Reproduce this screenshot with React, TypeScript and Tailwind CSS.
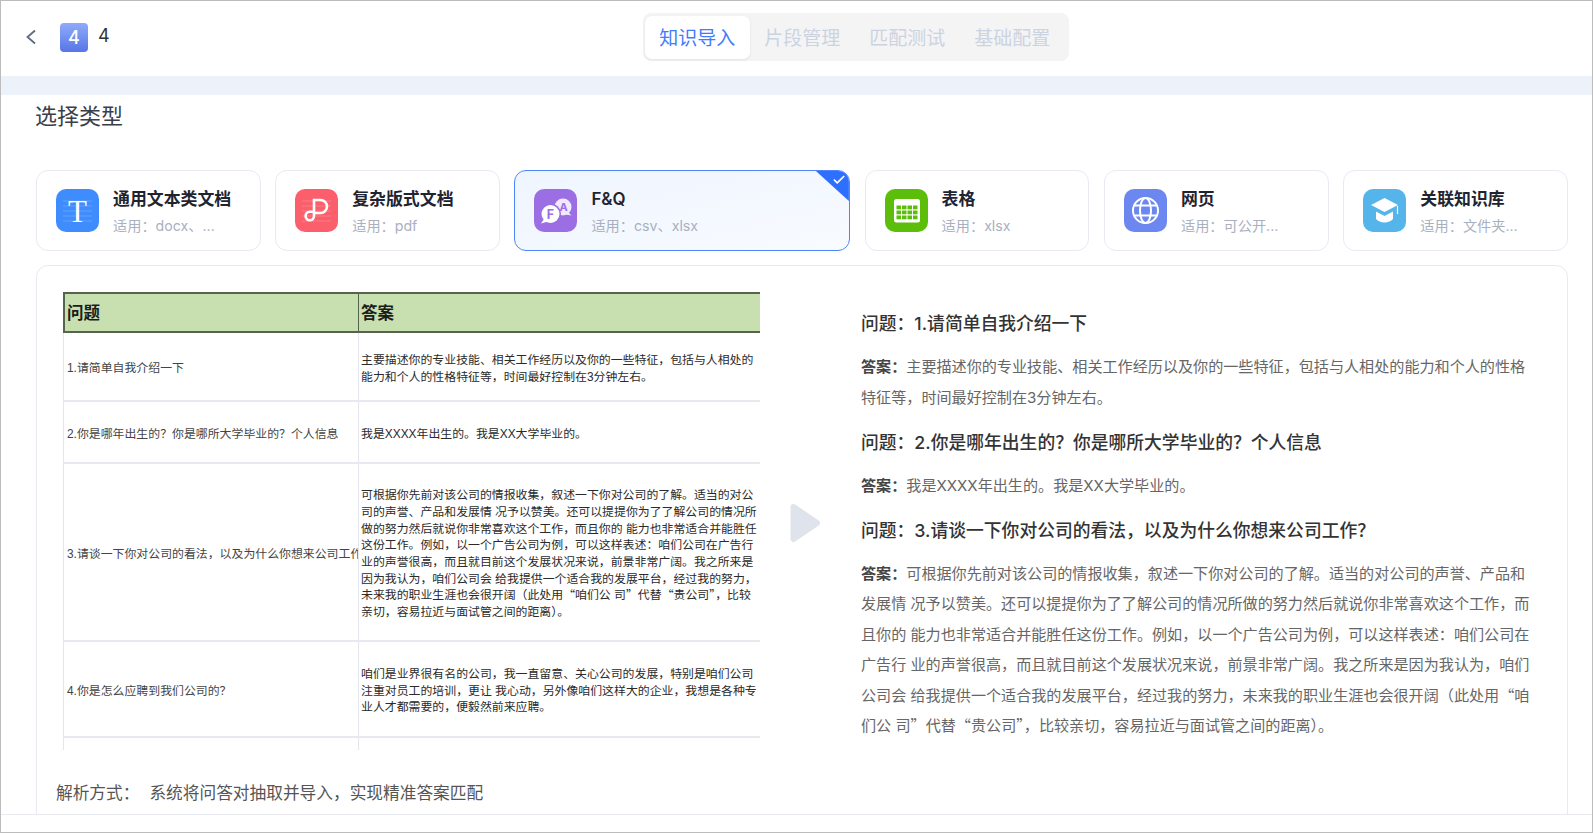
import { Check } from 'lucide-react'
import type { ReactNode } from 'react'

const tabs = ['知识导入', '片段管理', '匹配测试', '基础配置']

function IconBox({ className, children }: { className: string; children: ReactNode }) {
  return (
    <div className={`w-[43px] h-[43px] rounded-[10px] flex-shrink-0 overflow-hidden ${className}`}>
      <svg viewBox="0 0 43 43" className="w-full h-full">
        {children}
      </svg>
    </div>
  )
}

function FaintLines() {
  return (
    <g stroke="#ffffff" strokeOpacity="0.18" strokeWidth="1">
      <path d="M7 12h29M7 17h29M7 22h29M7 27h29M7 32h29" />
    </g>
  )
}

// curly quotes come out full width only from the CJK font
function Quoted({ text }: { text: string }) {
  return (
    <>
      {text.split(/([“”])/).map((part, i) =>
        part === '“' || part === '”' ? (
          <span key={i} className="leading-none font-['Noto_Sans_CJK_SC',sans-serif]">
            {part}
          </span>
        ) : (
          part
        ),
      )}
    </>
  )
}

const cards = [
  {
    title: '通用文本类文档',
    sub: '适用：docx、...',
    width: 'w-[224.500px]',
    icon: (
      <IconBox className="bg-[#3f8cff]">
        <FaintLines />
        <text x="21.5" y="33" textAnchor="middle" fontSize="31" fontFamily="Liberation Serif, serif" fill="#fff">
          T
        </text>
      </IconBox>
    ),
  },
  {
    title: '复杂版式文档',
    sub: '适用：pdf',
    width: 'w-[224.500px]',
    icon: (
      <IconBox className="bg-[#fb5f6b]">
        <FaintLines />
        <path
          d="M19 27V11h6.5a6.5 6.5 0 0 1 0 13H19M19 27a4.2 4.2 0 1 1-4.2-4.2H19"
          fill="none"
          stroke="#fff"
          strokeWidth="2.6"
        />
      </IconBox>
    ),
  },
  {
    title: 'F&Q',
    sub: '适用：csv、xlsx',
    width: 'w-[335.500px]',
    selected: true,
    icon: (
      <IconBox className="bg-[#9b6fe3]">
        <circle cx="29" cy="18" r="8.500" fill="#f1e9fd" />
        <path d="M34 23l3.500 3.500-6-1z" fill="#f1e9fd" />
        <text x="29.500" y="22" textAnchor="middle" fontSize="11" fontWeight="700" fontFamily="Inter, sans-serif" fill="#9b6fe3">
          A
        </text>
        <circle cx="16.500" cy="25" r="10.500" fill="#9b6fe3" />
        <circle cx="16.500" cy="25" r="9" fill="#fff" />
        <path d="M10 30l-3 4.500 7-2z" fill="#fff" />
        <text x="16.500" y="29.500" textAnchor="middle" fontSize="12.500" fontWeight="700" fontFamily="Inter, sans-serif" fill="#9b6fe3">
          F
        </text>
      </IconBox>
    ),
  },
  {
    title: '表格',
    sub: '适用：xlsx',
    width: 'w-[224.700px]',
    icon: (
      <IconBox className="bg-[#5cbd0a]">
        <rect x="9" y="10" width="26" height="23.500" rx="2.500" fill="#fff" />
        <g fill="#5cbd0a">
          {[16.5, 21.5, 26.5].map((y) =>
            [11.5, 17, 22.5, 28].map((x) => <rect key={`${x}-${y}`} x={x} y={y} width="4.500" height="3.800" />),
          )}
        </g>
      </IconBox>
    ),
  },
  {
    title: '网页',
    sub: '适用：可公开...',
    width: 'w-[224.700px]',
    icon: (
      <IconBox className="bg-[#6c88f0]">
        <g fill="none" stroke="#fff" strokeWidth="2">
          <circle cx="21.5" cy="21.5" r="12.500" />
          <ellipse cx="21.500" cy="21.500" rx="5.500" ry="12.500" />
          <path d="M10.500 16.500h22M10.500 26.500h22" />
        </g>
      </IconBox>
    ),
  },
  {
    title: '关联知识库',
    sub: '适用：文件夹...',
    width: 'w-[224.700px]',
    icon: (
      <IconBox className="bg-[#55b4ea]">
        <path d="M21.500 9L35 16l-13.500 7L8 16z" fill="#fff" />
        <path d="M13 22.500l8.500 4.500 8.500-4.500V30c-2 2-5 3.500-8.500 3.500S15 32 13 30z" fill="#fff" />
        <path d="M34.500 17v8" stroke="#fff" strokeWidth="1.200" />
      </IconBox>
    ),
  },
]

const rows = [
  {
    h: 'h-[69px]',
    q: '1.请简单自我介绍一下',
    a: ['主要描述你的专业技能、相关工作经历以及你的一些特征，包括与人相处的', '能力和个人的性格特征等，时间最好控制在3分钟左右。'],
  },
  {
    h: 'h-[62px]',
    q: '2.你是哪年出生的？你是哪所大学毕业的？个人信息',
    a: ['我是XXXX年出生的。我是XX大学毕业的。'],
  },
  {
    h: 'h-[178px]',
    q: '3.请谈一下你对公司的看法，以及为什么你想来公司工作',
    a: [
      '可根据你先前对该公司的情报收集，叙述一下你对公司的了解。适当的对公',
      '司的声誉、产品和发展情 况予以赞美。还可以提提你为了了解公司的情况所',
      '做的努力然后就说你非常喜欢这个工作，而且你的 能力也非常适合并能胜任',
      '这份工作。例如，以一个广告公司为例，可以这样表述：咱们公司在广告行',
      '业的声誉很高，而且就目前这个发展状况来说，前景非常广阔。我之所来是',
      '因为我认为，咱们公司会 给我提供一个适合我的发展平台，经过我的努力，',
      '未来我的职业生涯也会很开阔（此处用“咱们公 司”代替“贵公司”，比较',
      '亲切，容易拉近与面试管之间的距离）。',
    ],
  },
  {
    h: 'h-[96px]',
    q: '4.你是怎么应聘到我们公司的？',
    a: [
      '咱们是业界很有名的公司，我一直留意、关心公司的发展，特别是咱们公司',
      '注重对员工的培训，更让 我心动，另外像咱们这样大的企业，我想是各种专',
      '业人才都需要的，便毅然前来应聘。',
    ],
  },
]

const qa = [
  {
    q: '问题：1.请简单自我介绍一下',
    a: '主要描述你的专业技能、相关工作经历以及你的一些特征，包括与人相处的能力和个人的性格特征等，时间最好控制在3分钟左右。',
  },
  {
    q: '问题：2.你是哪年出生的？你是哪所大学毕业的？个人信息',
    a: '我是XXXX年出生的。我是XX大学毕业的。',
  },
  {
    q: '问题：3.请谈一下你对公司的看法，以及为什么你想来公司工作？',
    a: '可根据你先前对该公司的情报收集，叙述一下你对公司的了解。适当的对公司的声誉、产品和发展情 况予以赞美。还可以提提你为了了解公司的情况所做的努力然后就说你非常喜欢这个工作，而且你的 能力也非常适合并能胜任这份工作。例如，以一个广告公司为例，可以这样表述：咱们公司在广告行 业的声誉很高，而且就目前这个发展状况来说，前景非常广阔。我之所来是因为我认为，咱们公司会 给我提供一个适合我的发展平台，经过我的努力，未来我的职业生涯也会很开阔（此处用“咱们公 司”代替“贵公司”，比较亲切，容易拉近与面试管之间的距离）。',
  },
]

function TypeCard({ card }: { card: (typeof cards)[number] }) {
  return (
    <div
      className={`relative h-[81px] flex items-center gap-[14px] pl-[19px] rounded-[12px] border overflow-hidden ${card.width} ${
        card.selected ? 'border-[#4d86fb] bg-gradient-to-br from-[#eff5ff] to-[#f8fbff]' : 'border-[#e7eaf3] bg-white'
      }`}
    >
      {card.icon}
      <div className="min-w-0 mt-[1px]">
        <div className="text-[16.900px] leading-[24px] font-semibold text-[#1f2430] whitespace-nowrap">{card.title}</div>
        <div className="mt-[5px] text-[14.200px] leading-[20px] text-[#a9b0c0] whitespace-nowrap">{card.sub}</div>
      </div>
      {card.selected && (
        <div className="absolute top-0 right-0 w-[33px] h-[30px] bg-[#2f6fff] [clip-path:polygon(0_0,100%_0,100%_100%)]">
          <Check className="absolute top-[2px] right-[3px] w-[14px] h-[14px] text-white" strokeWidth={3} />
        </div>
      )}
    </div>
  )
}

function SampleTable() {
  return (
    <div className="w-[697px] h-[458px] flex-shrink-0 overflow-hidden text-[11.900px] leading-[16.700px] text-[#2a2a2a] font-['Liberation_Sans','Noto_Sans_CJK_SC',sans-serif]">
      <div className="grid grid-cols-[294px_401px] h-[41px] bg-[#c8e0b0] border-y-2 border-l-2 border-[#55634f] text-[16.500px] font-bold text-[#1c1c1c]">
        <div className="flex items-center pt-[1px] pl-[2px] border-r border-[#55634f]">问题</div>
        <div className="flex items-center pt-[1px] pl-[2px]">答案</div>
      </div>
      {rows.map((row) => (
        <div key={row.q} className={`grid grid-cols-[296px_401px] border-b-2 border-[#e8e9f0] ${row.h}`}>
          <div className="flex items-center pt-[4px] pl-[3px] border-l border-r border-[#e4e6ee] text-[#444] whitespace-nowrap overflow-hidden">
            {row.q}
          </div>
          <div className="flex flex-col justify-center pt-[4px] pl-[2px] whitespace-nowrap overflow-hidden">
            {row.a.map((line) => (
              <div key={line}>
                <Quoted text={line} />
              </div>
            ))}
          </div>
        </div>
      ))}
      <div className="grid grid-cols-[296px_401px] h-[12px]">
        <div className="border-l border-r border-[#e4e6ee]" />
      </div>
    </div>
  )
}

export default function App() {
  return (
    <div className="h-screen w-full flex flex-col overflow-hidden bg-white border border-[#bcbcbc] font-['Inter','Noto_Sans_CJK_SC',sans-serif]">
      <header className="h-[75px] flex-shrink-0 flex items-start">
        <svg viewBox="0 0 12 16" className="mt-[28px] ml-[24px] w-[12px] h-[16px] flex-shrink-0">
          <path d="M10 1.500L2.500 8l7.500 6.500" fill="none" stroke="#5f6b80" strokeWidth="1.800" />
        </svg>
        <div className="mt-[22px] ml-[23px] w-[28px] h-[29px] rounded-[4px] bg-gradient-to-b from-[#8fabfb] to-[#5875e6] flex items-center justify-center text-[18px] font-medium text-white">
          4
        </div>
        <div className="mt-[22px] ml-[10px] text-[18px] leading-[26px] text-[#333]">4</div>
        <nav className="mt-[12px] ml-[533px] h-[48px] w-[426px] flex items-center px-[2px] rounded-[8px] bg-[#f4f4f5]">
          {tabs.map((tab, i) => (
            <div
              key={tab}
              className={`h-[43px] w-[105px] flex items-center justify-center pt-[5px] text-[19px] rounded-[7px] ${
                i === 0 ? 'bg-white text-[#3f7bff] shadow-[0_1px_3px_rgba(0,0,0,0.08)]' : 'text-[#cbd3e1]'
              }`}
            >
              {tab}
            </div>
          ))}
        </nav>
      </header>
      <div className="h-[19px] flex-shrink-0 bg-[#edf1f9]" />
      <main className="flex-1 min-h-0 overflow-hidden pl-[35px] pr-[24px] pt-[7px]">
        <h2 className="-ml-[1px] text-[22px] leading-[28px] text-[#3a3f4b]">选择类型</h2>
        <div className="mt-[40px] flex gap-[14.700px]">
          {cards.map((card) => (
            <TypeCard key={card.title} card={card} />
          ))}
        </div>
        <section className="mt-[14px] h-[600px] rounded-t-[12px] border border-[#e7eaf3] pt-[26px] pl-[26px]">
          <div className="flex">
            <SampleTable />
            <svg viewBox="0 0 30 40" className="self-center mt-[4px] ml-[30px] w-[30px] h-[40px] flex-shrink-0">
              <path d="M3.500 4L27 20L3.500 36Z" fill="#dfe3ec" stroke="#dfe3ec" strokeWidth="6" strokeLinejoin="round" />
            </svg>
            <div className="ml-[41px] w-[672px] pt-[19px]">
              {qa.map((item, i) => (
                <div key={item.q} className={i > 0 ? 'mt-[16.500px]' : ''}>
                  <h3 className="text-[17.800px] leading-[26px] font-medium text-[#333]">{item.q}</h3>
                  <p className="mt-[15px] text-[15.100px] leading-[30.500px] text-[#666]">
                    <span className="font-semibold text-[#444]">答案：</span>
                    <Quoted text={item.a} />
                  </p>
                </div>
              ))}
            </div>
          </div>
          <div className="mt-[31px] ml-[-7px] flex text-[16.700px] leading-[24px] text-[#555]">
            <span>解析方式：</span>
            <span className="ml-[10px]">系统将问答对抽取并导入，实现精准答案匹配</span>
          </div>
        </section>
      </main>
      <footer className="h-[18px] flex-shrink-0 bg-white border-t border-[#e8eaf0]" />
    </div>
  )
}
